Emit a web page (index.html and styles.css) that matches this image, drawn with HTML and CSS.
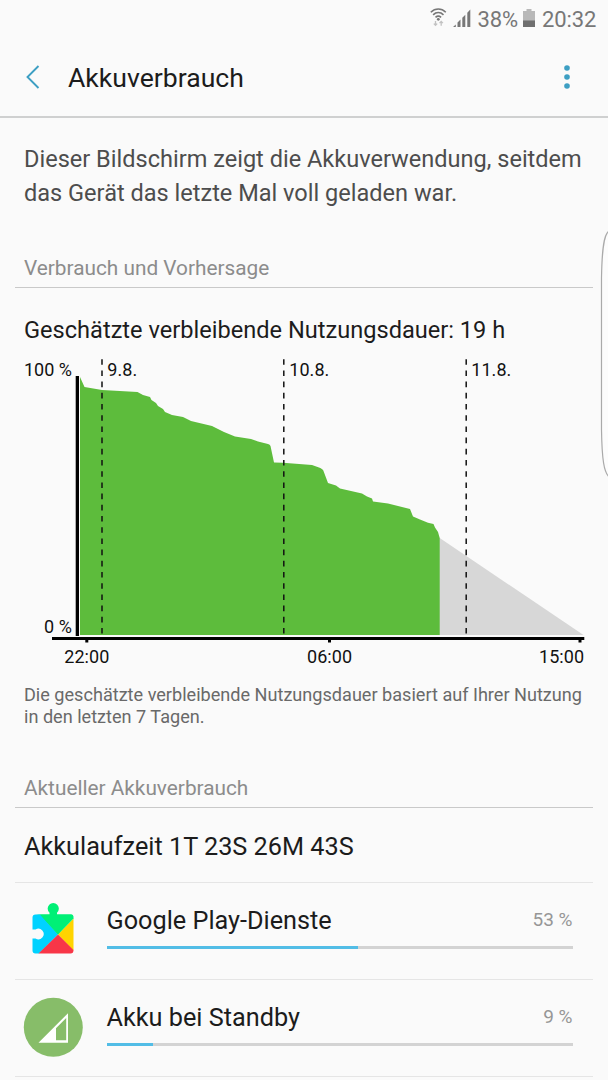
FILE: index.html
```html
<!DOCTYPE html>
<html lang="de">
<head>
<meta charset="utf-8">
<title>Akkuverbrauch</title>
<link rel="stylesheet" href="styles.css">
</head>
<body>
<div class="screen">
  <div class="statusbar">
    <svg class="wifi" width="18" height="20" viewBox="0 0 18 20" fill="none" stroke="#777" stroke-width="1.600">
      <path d="M.8 5.200C5.200.9 11.400.9 15.800 5.200M3.100 7.800c3.100-2.900 7.300-2.900 10.400 0M5.500 10.400c1.700-1.500 3.900-1.500 5.600 0"/>
      <circle cx="8.300" cy="12.300" r="1.400" fill="#777" stroke="none"/>
      <path d="M5.500 14v4.200M3.800 16.600l1.700 1.700 1.700-1.700M11.200 18.800v-4.300M9.500 16.100l1.700-1.700 1.700 1.700" stroke="#c2c2c2" stroke-width="1.300"/>
    </svg>
    <svg class="signal" width="18" height="19" viewBox="0 0 18 19" fill="#777">
      <path d="M0 18l2.800-2.500V18zM4.500 13.500l3-3V18h-3zM9.300 8.700l3-3V18h-3zM14.300 3.700l3-3.200V18h-3z"/>
    </svg>
    <span class="percent">38%</span>
    <svg class="battery" width="12" height="18" viewBox="0 0 12 18">
      <path d="M0 2h3.500V0h5v2H12v10H0z" fill="#b8b8b8"/><path d="M0 11.500h12V18H0z" fill="#6f6f6f"/>
    </svg>
    <span class="clock">20:32</span>
  </div>
  <header class="appbar">
    <svg class="back" width="15" height="26" viewBox="0 0 15 26" fill="none" stroke="#3d9fc3" stroke-width="1.900"><path d="M13.500 2L2.500 13l11 11"/></svg>
    <h1 class="title">Akkuverbrauch</h1>
    <svg class="more" width="6" height="24" viewBox="0 0 6 24" fill="#3d9fc3"><circle cx="3" cy="3" r="2.800"/><circle cx="3" cy="12" r="2.800"/><circle cx="3" cy="21" r="2.800"/></svg>
  </header>
  <main>
    <p class="intro">Dieser Bildschirm zeigt die Akkuverwendung, seitdem<br>das Gerät das letzte Mal voll geladen war.</p>
    <h2 class="section">Verbrauch und Vorhersage</h2>
    <p class="estimate">Geschätzte verbleibende Nutzungsdauer: 19 h</p>
    <svg class="chart" width="608" height="320" viewBox="0 350 608 320">
      <path fill="#d7d7d7" d="M439 537.500L583.500 635H439z"/>
      <path fill="#5dbc3c" d="M80 635V377L84.500 387 102 390 137.500 392 143 395 150 397 151.500 400 156 403 158 406 163 409 165 412 172 415 183 417 191 421 212 426 224 432 235 436.500 251 439 258 441.500 268 444Q270 444.500 270.500 446L274 462.500 283 462.700 312 465 319 467.500Q323 469 323.500 471L328 483 336 485.500 340 488.500 362 493.500 367 496.500 372 498.500 373 501.500 388 503.500 410 509 413 516.500 420 519.500 428 522.700 433.500 524 435 527.500 438 532 439.700 538V635z"/>
      <path fill="none" stroke="#111" stroke-width="1.500" stroke-dasharray="5.600 5.600" d="M102 359.200V635M283.800 359.200V635M466.200 359.200V635"/>
      <path d="M75.700 376H79V636H75.700zM52 637H584.300V640H52zM85.300 640h3v2.500h-3zM328 640h3v2.500h-3zM578.500 640h3v2.500h-3z"/>
      <g class="labels">
        <text x="72" y="376" text-anchor="end" textLength="48">100 %</text>
        <text x="72" y="633" text-anchor="end" textLength="28">0 %</text>
        <text x="107.300" y="376" textLength="30">9.8.</text>
        <text x="289.300" y="376" textLength="40">10.8.</text>
        <text x="471.300" y="376" textLength="40">11.8.</text>
        <text x="86.800" y="663" text-anchor="middle" textLength="45">22:00</text>
        <text x="329.500" y="663" text-anchor="middle" textLength="45">06:00</text>
        <text x="584" y="663" text-anchor="end" textLength="45">15:00</text>
      </g>
    </svg>
    <p class="note">Die geschätzte verbleibende Nutzungsdauer basiert auf Ihrer Nutzung<br>in den letzten 7 Tagen.</p>
    <h2 class="section section-current">Aktueller Akkuverbrauch</h2>
    <p class="runtime">Akkulaufzeit 1T 23S 26M 43S</p>
    <ul class="apps">
      <li class="app">
        <svg class="icon" width="60" height="60" viewBox="-1 -1 60 60">
          <path fill="#00f076" d="M12 13.500H25.500V11.800A5.600 5.600 0 1 1 33 11.800V13.500H47a2.500 2.500 0 0 1 2 .8L34 33.500 15 14z"/>
          <path fill="#00d2ff" d="M16 13.500H11.500A3 3 0 0 0 8.500 16.500V28.500H11.500A5.300 5.300 0 1 1 11.500 37.500H8.500V49.500A3 3 0 0 0 11.500 52.500H15L34 33.500z"/>
          <path fill="#ffd400" d="M49.500 17.500L34 33.500 49.500 49.500z"/>
          <path fill="#f83648" d="M34 33.500L14.500 52.500H46.500Q49.500 52.500 49.500 49z"/>
          <path fill="#00f076" d="M16 13.500H47Q49.500 13.500 49.500 16V17.500L34 33.500z"/>
        </svg>
        <div class="usage">
          <div class="row"><span class="name">Google Play-Dienste</span><span class="value">53 %</span></div>
          <div class="track"><div class="fill" style="width:54%"></div></div>
        </div>
      </li>
      <li class="app">
        <svg class="icon" width="60" height="60" viewBox="0 -.7 60 60">
          <circle cx="30.300" cy="29.600" r="29.500" fill="#87bd69"/>
          <path fill="#fff" fill-rule="evenodd" d="M45 15.500V45H15.500zM43.200 20.300L33 30.500V42.500H43.200z"/>
        </svg>
        <div class="usage">
          <div class="row"><span class="name">Akku bei Standby</span><span class="value">9 %</span></div>
          <div class="track"><div class="fill" style="width:10%"></div></div>
        </div>
      </li>
    </ul>
  </main>
  <svg class="edge-panel" width="9" height="254" viewBox="599 228 9 254"><path d="M609 231C604 234 602 248 601.500 278V430C602 460 604 472 609 477" fill="#fcfcfc" stroke="#aaa" stroke-width="1.200"/></svg>
</div>
</body>
</html>
```
FILE: styles.css
```css
* { box-sizing: border-box; }
body { margin: 0; background: #fafafa; font-family: Roboto, "Liberation Sans", sans-serif; color: #1c1c1c; }
h1, h2, p, ul { margin: 0; padding: 0; font-weight: 400; white-space: nowrap; }
svg { display: block; flex: none; }
.screen { position: relative; width: 608px; height: 1080px; overflow: hidden; }
.statusbar { display: flex; height: 38px; padding: 0 11px 0 430px; color: #777; font-size: 22px; line-height: 39px; }
.wifi { margin-top: 7px; }
.signal { margin: 9px 0 0 4.500px; }
.percent { width: 41px; margin-left: 7px; letter-spacing: -.15px; }
.battery { margin: 8.500px 0 0 4.500px; }
.clock { margin-left: 7px; letter-spacing: -.1px; }
.appbar { display: flex; align-items: center; height: 80px; padding: 2px 38.500px 2px 25px; border-bottom: 2px solid #cfd0d0; }
.title { margin-left: 28px; padding-top: 2px; font-size: 26.600px; line-height: 36px; }
.more { margin-left: auto; }
.intro { height: 131px; padding: 24px 24px 0; font-size: 23.550px; line-height: 34px; color: #4d4d4d; }
.section { height: 39px; margin: 0 15px; padding: 0 9px; border-bottom: 1px solid #c9c9c9; font-size: 20.800px; line-height: 39px; color: #8c8c8c; }
.estimate { height: 62px; padding: 24px 24px 0; font-size: 23.600px; line-height: 36px; }
.chart { width: 608px; height: 320px; }
.labels { font-size: 18px; fill: #111; }
.note { height: 99px; padding: 14px 24px 0; font-size: 18.100px; line-height: 22px; color: #696969; }
.runtime { height: 74px; margin: 0 15px; padding: 0 9px; font-size: 25.250px; line-height: 77px; }
.apps { list-style: none; margin: 0 15px; }
.app { display: flex; height: 97.300px; padding: 17px 20.500px 0 8px; border-top: 1px solid #e5e5e5; }
.app:last-child { height: 98px; border-bottom: 1px solid #e5e5e5; }
.usage { flex: 1; margin-left: 23.500px; }
.row { display: flex; justify-content: space-between; height: 46px; line-height: 40px; }
.name { font-size: 25.250px; line-height: 42px; }
.value { font-size: 19px; }
.value { color: #969696; }
.track { height: 3px; background: #d3d3d3; }
.fill { height: 3px; background: #52bde6; }
.edge-panel { position: absolute; right: 0; top: 228px; }
```
